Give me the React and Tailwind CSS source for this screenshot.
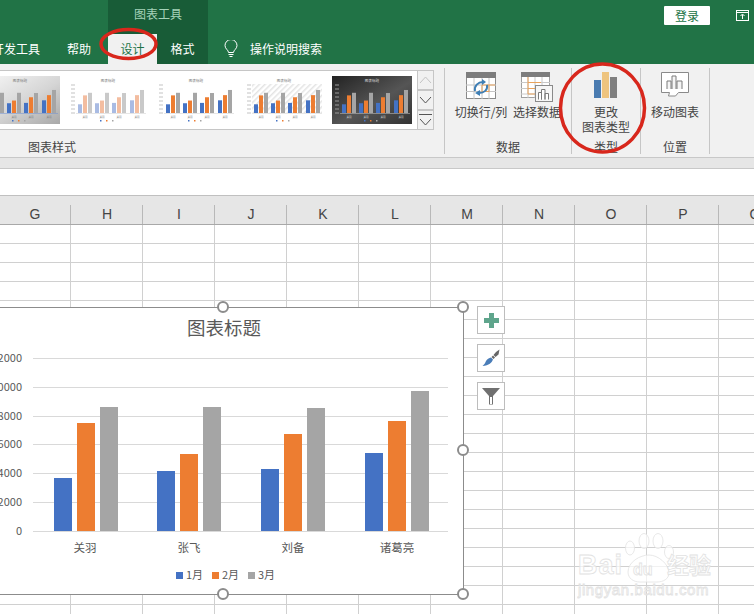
const font = { fontFamily: '"Noto Sans CJK SC", "Liberation Sans", sans-serif' };
const columns = ['G','H','I','J','K','L','M','N','O','P','Q'];
const rows = Array.from({ length: 21 }, (_, i) => i);
const chartData = [
  { name: '关羽', x: 54, labelX: 85, tops: [478, 423, 407] },
  { name: '张飞', x: 157, labelX: 189, tops: [471, 454, 407] },
  { name: '刘备', x: 261, labelX: 293, tops: [469, 434, 408] },
  { name: '诸葛亮', x: 365, labelX: 397, tops: [453, 421, 391] },
];
const seriesColors = ['#4472c4', '#ed7d31', '#a5a5a5'];
const thumbValues = [[3700,7500,8600],[4150,5300,8600],[4300,6700,8500],[5400,7600,9800]];
const thumbCenters = [17, 34, 51, 69];

function Thumb({ id, variant }) {
  const dark = variant === 'dark';
  const colors = variant === 'light' ? ['#a9bbe3', '#f3bda0', '#c9c9c9'] : seriesColors;
  const text = dark ? '#ddd' : '#777';
  return (
    <svg width="80" height="48" viewBox="0 0 80 48" className="shrink-0 block">
      <defs>
        <linearGradient id={`g${id}`} x1="0" y1="0" x2="1" y2="1">
          <stop offset="0" stopColor={variant === 'gradient' ? '#f8f8f8' : dark ? '#222' : '#fff'} />
          <stop offset="0.55" stopColor={variant === 'gradient' ? '#d5d5d5' : dark ? '#555' : '#fff'} />
          <stop offset="1" stopColor={variant === 'gradient' ? '#a8a8a8' : dark ? '#333' : '#fff'} />
        </linearGradient>
        <pattern id={`h${id}`} width="4" height="4" patternUnits="userSpaceOnUse" patternTransform="rotate(45)">
          <rect width="1.5" height="4" fill="#e4e4e4" />
        </pattern>
      </defs>
      <rect width="80" height="48" fill={`url(#g${id})`} />
      {variant === 'hatch' && <rect x="8" y="8" width="70" height="29" fill={`url(#h${id})`} />}
      <text x="40" y="6" fontSize="3.6" textAnchor="middle" fill={text} style={font}>图表标题</text>
      {[9, 13, 17, 21, 25, 29, 33, 37].map((y) => (
        <rect key={y} x="3" y={y - 0.5} width="4" height="1" fill={dark ? '#999' : '#c4c4c4'} />
      ))}
      {thumbCenters.map((c, g) => (
        <g key={c}>
          {thumbValues[g].map((v, i) => {
            const h = v * 0.00235;
            return <rect key={i} x={c - 7 + i * 5} y={37 - h} width="4" height={h} fill={colors[i]} />;
          })}
          <text x={c} y="41.5" fontSize="2.6" textAnchor="middle" fill={text} style={font}>关羽</text>
        </g>
      ))}
      <rect x="8" y="37" width="70" height="0.5" fill={variant === 'gradient' ? '#6d8fd0' : '#ccc'} />
      <rect x="32" y="44" width="1.5" height="1.5" fill="#4472c4" />
      <rect x="38" y="44" width="1.5" height="1.5" fill="#ed7d31" />
      <rect x="44" y="44" width="1.5" height="1.5" fill="#a5a5a5" />
    </svg>
  );
}

function SwitchIcon() {
  return (
    <svg width="30" height="27" viewBox="0 0 30 27" className="block">
      <rect x="0.5" y="0.5" width="29" height="26" fill="#fff" stroke="#8a8a8a" />
      <rect x="0" y="0" width="30" height="6" fill="#7d7d7d" />
      <path d="M0 13h30M0 19.5h30M8 6v21M16 6v21M23 6v21" stroke="#c4c4c4" fill="none" />
      <path d="M16 13h13M16 19.5h7M16 13v7M23 13v7" stroke="#e9a35c" fill="none" />
      <path d="M9 19c-1-5 3-9 8-9" stroke="#3f7fb5" strokeWidth="2" fill="none" />
      <path d="M16 7l4 3-4 3z" fill="#3f7fb5" />
      <path d="M21 13c1 5-3 8-8 8" stroke="#3f7fb5" strokeWidth="2" fill="none" />
      <path d="M14 18l-5 3 5 3z" fill="#3f7fb5" />
    </svg>
  );
}
function SelectIcon() {
  return (
    <svg width="32" height="30" viewBox="0 0 32 30" className="block">
      <rect x="0.5" y="0.5" width="28" height="25" fill="#fff" stroke="#a0a0a0" />
      <rect x="0" y="0" width="29" height="5" fill="#7d7d7d" />
      <path d="M0 10.5h29M0 16.5h29M0 22h29M7 5v21M14 5v21M21 5v21" stroke="#c8c8c8" fill="none" />
      <path d="M7 10.5h13M7 16.5h13M7 22h7M7 5v17" stroke="#e9a35c" fill="none" />
      <rect x="14.5" y="13.5" width="17" height="16" fill="#f6f6f6" stroke="#8a8a8a" />
      <path d="M17.5 27.5v-7h3v7M20.5 27.5v-10h3.5v10M24 27.5v-6h3.5v6" fill="#fff" stroke="#7a7a7a" />
    </svg>
  );
}
function ChartTypeIcon() {
  return (
    <svg width="24" height="27" viewBox="0 0 24 27" className="block">
      <rect x="0" y="8" width="7" height="18" fill="#4a7bb0" />
      <rect x="8" y="0" width="7" height="26" fill="#eec47f" />
      <rect x="16" y="5" width="7" height="21" fill="#7f7f7f" />
    </svg>
  );
}
function MoveIcon() {
  return (
    <svg width="28" height="25" viewBox="0 0 28 25" className="block">
      <path d="M0.5 0.5h27v20h-10l-3 3.5h-7l1-3.5h-8z" fill="#fff" stroke="#8a8a8a" />
      <path d="M6 17v-8h4v8M11 17v-13h4v13M16 17v-8h5v8" fill="#f5f5f5" stroke="#7a7a7a" />
    </svg>
  );
}

function ScrollBtn({ children, extra }) {
  return <div className={`h-[20px] w-[17px] border border-[#c6c6c6] flex items-center justify-center ${extra || ''}`}>{children}</div>;
}

function LargeButton({ icon, lines, width }) {
  return (
    <div className={`${width} flex flex-col items-center text-[12px] leading-[15px] text-[#444]`}>
      <div className="h-[36px] pt-[4px] flex justify-center">{icon}</div>
      {lines.map((l) => <div key={l} className="whitespace-nowrap">{l}</div>)}
    </div>
  );
}

function Group({ width, label, children, labelClass }) {
  return (
    <div className={`${width} h-[86px] mt-[4px] border-r border-[#c6c6c6] flex flex-col shrink-0`}>
      {children}
      <div className={`mt-auto h-[14px] leading-[14px] text-[12px] text-[#444] whitespace-nowrap ${labelClass || 'text-center'}`}>{label}</div>
    </div>
  );
}

function Handle({ pos }) {
  return <div className={`absolute w-[12px] h-[12px] rounded-full bg-white border-2 border-[#8c8c8c] ${pos}`} />;
}

function Chart() {
  return (
    <div className="absolute -left-[17px] top-[82px] w-[481px] h-[288px] bg-white border border-[#8c8c8c]">
      <svg width="479" height="286" viewBox="-16 308 479 286" className="block" style={font}>
        <text x="224" y="335" fontSize="18.5" textAnchor="middle" fill="#595959">图表标题</text>
        {[358, 387, 416, 444, 473, 502, 531].map((y) => (
          <rect key={y} x="33" y={y} width="415" height="1" fill="#d9d9d9" />
        ))}
        {['12000','10000','8000','6000','4000','2000','0'].map((t, i) => (
          <text key={t} x="22" y={[362,391,420,448,477,506,535][i]} fontSize="11" textAnchor="end" fill="#595959">{t}</text>
        ))}
        {chartData.map((g) => (
          <g key={g.name}>
            {g.tops.map((top, i) => (
              <rect key={i} x={g.x + i * 23} y={top} width="18" height={531 - top} fill={seriesColors[i]} />
            ))}
            <text x={g.labelX} y="552" fontSize="11.5" textAnchor="middle" fill="#595959">{g.name}</text>
          </g>
        ))}
        {['1月','2月','3月'].map((t, i) => (
          <g key={t}>
            <rect x={176 + i * 36} y="572" width="7" height="7" fill={seriesColors[i]} />
            <text x={186 + i * 36} y="579" fontSize="11" fill="#595959">{t}</text>
          </g>
        ))}
      </svg>
      <Handle pos="left-[233px] -top-[7px]" />
      <Handle pos="left-[473px] -top-[7px]" />
      <Handle pos="left-[473px] top-[136px]" />
      <Handle pos="left-[233px] top-[280px]" />
      <Handle pos="left-[473px] top-[280px]" />
    </div>
  );
}

function SideButton({ children }) {
  return <div className="w-[28px] h-[28px] bg-white border border-[#bdbdbd] flex items-center justify-center">{children}</div>;
}

function Watermark() {
  return (
    <svg width="140" height="68" viewBox="577 531 140 68" className="absolute left-[577px] top-[306px]" fill="#fff" fillOpacity="0.7" stroke="#e2e2e2" strokeWidth="0.8">
      <text x="578" y="574" fontSize="27" fontWeight="700" letterSpacing="1" fontFamily="Liberation Sans, sans-serif">Bai</text>
      <ellipse cx="630" cy="548" rx="4.5" ry="7" />
      <ellipse cx="644" cy="541" rx="5" ry="7.5" />
      <ellipse cx="658" cy="541" rx="5" ry="7.5" />
      <ellipse cx="669" cy="552" rx="4.5" ry="6.5" />
      <path d="M628 572c0-10 12-17 21-17s20 9 20 18c0 6-6 9-12 9h-17c-7 0-12-4-12-10z" />
      <text x="633" y="575" fontSize="16" fontWeight="700" fontFamily="Liberation Sans, sans-serif">du</text>
      <text x="667" y="573" fontSize="22" fontWeight="700" fontFamily="Noto Sans CJK SC, sans-serif">经验</text>
      <text x="578" y="595" fontSize="15" letterSpacing="0.6" fontFamily="Liberation Sans, sans-serif">jingyan.baidu.com</text>
    </svg>
  );
}

export default function App() {
  return (
    <div className="relative w-[754px] h-[614px] overflow-hidden bg-white" style={font}>
      <header className="h-[64px] bg-[#217346] flex flex-col">
        <div className="h-[34px] flex">
          <div className="w-[108px]" />
          <div className="w-[100px] bg-[#185c37] flex items-center justify-center text-[12px] text-[#a6d3b9]">
            <span className="-mt-[6px]">图表工具</span>
          </div>
          <div className="ml-[456px] mt-[6px] w-[46px] h-[19px] bg-white rounded-[1px] flex items-center justify-center text-[12px] text-[#217346]">登录</div>
          <svg width="14" height="11" viewBox="0 0 14 11" className="ml-[26px] mt-[10px]" fill="none" stroke="#fff">
            <rect x="0.5" y="0.5" width="12" height="10" />
            <path d="M0.5 2.5h12M6.5 9V4.5M4.5 6l2-2 2 2" />
          </svg>
        </div>
        <nav className="h-[30px] flex items-center text-[12px] text-white">
          <span className="-ml-[8px] w-[48px] whitespace-nowrap">开发工具</span>
          <span className="ml-[27px] w-[24px] whitespace-nowrap">帮助</span>
          <span className="ml-[17px] w-[49px] h-full bg-[#f1f1f1] text-[#217346] flex items-center justify-center">设计</span>
          <span className="w-[51px] h-full bg-[#185c37] flex items-center justify-center">格式</span>
          <svg width="14" height="18" viewBox="0 0 14 18" fill="none" stroke="#fff" className="ml-[16px]">
            <path d="M4.5 12.5c0-2.5-3.5-3.5-3.5-7a6 6 0 0 1 12 0c0 3.5-3.5 4.5-3.5 7z" />
            <path d="M4.5 14.5h5M5.5 16.5h3" />
          </svg>
          <span className="ml-[12px] whitespace-nowrap">操作说明搜索</span>
        </nav>
      </header>

      <section className="h-[94px] bg-[#f1f1f1] border-b border-[#c8c8c8] flex">
        <Group width="w-[445px]" label="图表样式" labelClass="pl-[28px]">
          <div className="mt-[2px] h-[60px] flex">
            <div className="w-[417px] h-[60px] bg-white border-y border-[#c6c6c6] overflow-hidden flex items-center">
              <div className="flex gap-[8px] -ml-[20px]">
                <Thumb id="a" variant="gradient" />
                <Thumb id="b" variant="light" />
                <Thumb id="c" variant="plain" />
                <Thumb id="d" variant="hatch" />
                <Thumb id="e" variant="dark" />
              </div>
            </div>
            <div className="flex flex-col">
              <ScrollBtn>
                <svg width="13" height="8" viewBox="0 0 13 8" fill="none" stroke="#c4c4c4"><path d="M1 7l5.5-6 5.5 6" /></svg>
              </ScrollBtn>
              <ScrollBtn>
                <svg width="13" height="8" viewBox="0 0 13 8" fill="none" stroke="#555"><path d="M1 1l5.5 6 5.5-6" /></svg>
              </ScrollBtn>
              <ScrollBtn extra="flex-col gap-[3px]">
                <div className="w-[13px] h-px bg-[#555]" />
                <svg width="13" height="8" viewBox="0 0 13 8" fill="none" stroke="#555"><path d="M1 1l5.5 6 5.5-6" /></svg>
              </ScrollBtn>
            </div>
          </div>
        </Group>
        <Group width="w-[127px]" label="数据" labelClass="pl-[51px]">
          <div className="flex pl-[8px]">
            <LargeButton width="w-[56px]" icon={<SwitchIcon />} lines={['切换行/列']} />
            <LargeButton width="w-[56px]" icon={<SelectIcon />} lines={['选择数据']} />
          </div>
        </Group>
        <Group width="w-[69px]" label="类型">
          <LargeButton width="w-full" icon={<ChartTypeIcon />} lines={['更改', '图表类型']} />
        </Group>
        <Group width="w-[69px]" label="位置">
          <LargeButton width="w-full" icon={<MoveIcon />} lines={['移动图表']} />
        </Group>
      </section>

      <div className="h-[11px] bg-[#e6e6e6] border-b border-[#c8c8c8]" />
      <div className="h-[26px] bg-white" />

      <div className="h-[30px] bg-[#e6e6e6] border-y border-[#a8a8a8] border-t-[#c0c0c0] flex -ml-px w-[800px]">
        {columns.map((c) => (
          <div key={c} className="w-[72px] shrink-0 flex justify-center items-end pb-[1px] text-[14px] leading-[18px] text-[#444] relative" style={{ fontFamily: '"Liberation Sans", sans-serif' }}>
            {c}
            <div className="absolute right-0 bottom-0 h-[19px] w-px bg-[#b8b8b8]" />
          </div>
        ))}
      </div>

      <main className="relative">
        <div className="-ml-px w-[800px]">
          {rows.map((r) => (
            <div key={r} className="flex h-[19px]">
              {columns.map((c) => (
                <div key={c} className="w-[72px] h-[19px] shrink-0 border-r border-b border-[#d0d0d0]" />
              ))}
            </div>
          ))}
        </div>

        <Chart />

        <div className="absolute left-[477px] top-[81px] flex flex-col gap-[10px]">
          <SideButton>
            <svg width="15" height="15" viewBox="0 0 15 15"><path d="M5 0h5v5h5v5h-5v5H5v-5H0V5h5z" fill="#5fa58c" /></svg>
          </SideButton>
          <SideButton>
            <svg width="18" height="18" viewBox="0 0 18 18">
              <path d="M17.5 0.5l-1 5-3 2.5-2-2 2.5-3z" fill="#666" />
              <path d="M11 6.5l2 2-1.5 1.5-2-2z" fill="#666" />
              <path d="M9 8.5l2 2c-1 3-4 6-10.5 6.5 2-1.5 2.5-3 3.5-5 1-2 3-3 5-3.5z" fill="#4a7db8" />
            </svg>
          </SideButton>
          <SideButton>
            <svg width="18" height="17" viewBox="0 0 18 17">
              <path d="M0 0h18l-7 8v8.5H7V8z" fill="#707070" />
              <path d="M8 9h2v7H8z" fill="#fff" />
            </svg>
          </SideButton>
        </div>

        <Watermark />
      </main>

      <svg width="754" height="170" viewBox="0 0 754 170" className="absolute left-0 top-0 pointer-events-none" fill="none" stroke="#d8271c" strokeWidth="3.5">
        <ellipse cx="128.5" cy="44" rx="27.5" ry="14.5" />
        <ellipse cx="602.5" cy="108" rx="42" ry="44" />
      </svg>
    </div>
  );
}
